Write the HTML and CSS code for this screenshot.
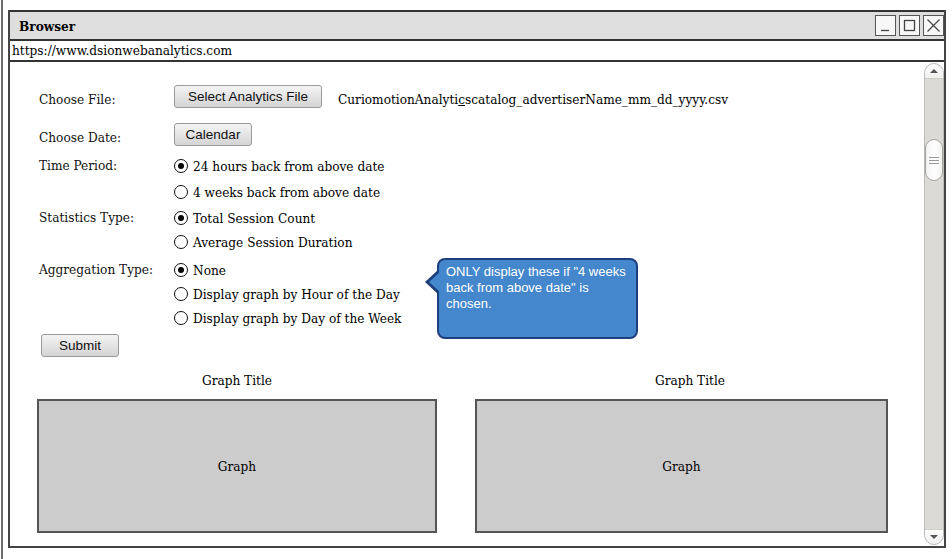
FILE: index.html
```html
<!DOCTYPE html>
<html>
<head>
<meta charset="utf-8">
<title>Browser</title>
<link rel="stylesheet" href="styles.css">
</head>
<body>
<div class="page">
  <div class="edge"></div>
  <div class="window">
    <div class="titlebar">
      <span class="title">Browser</span>
      <div class="winbtns">
        <span class="winbtn"><svg width="17" height="17" viewBox="0 0 17 17"><path d="M4 13.5h8" stroke="#444" stroke-width="1.3" fill="none"/></svg></span>
        <span class="winbtn"><svg width="17" height="17" viewBox="0 0 17 17"><rect x="3.5" y="3.5" width="10" height="10" stroke="#444" stroke-width="1.3" fill="none"/></svg></span>
        <span class="winbtn"><svg width="17" height="17" viewBox="0 0 17 17"><path d="M2.5 2.5l12 12M14.5 2.5l-12 12" stroke="#444" stroke-width="1.2" fill="none"/></svg></span>
      </div>
    </div>
    <div class="urlbar">https://www.dsionwebanalytics.com</div>
    <div class="content">
      <div class="main">
        <div class="row row-file">
          <div class="label">Choose File:</div>
          <button class="btn btn-file">Select Analytics File</button>
          <div class="filename">CuriomotionAnalyti<span class="ul">c</span>scatalog_advertiserName_mm_dd_yyyy.csv</div>
        </div>
        <div class="row row-date">
          <div class="label">Choose Date:</div>
          <button class="btn btn-cal">Calendar</button>
        </div>
        <div class="row group group-time">
          <div class="label glabel">Time Period:</div>
          <div class="radios radios-spaced">
            <div class="radio"><span class="circle on"></span><span>24 hours back from above date</span></div>
            <div class="radio"><span class="circle"></span><span>4 weeks back from above date</span></div>
          </div>
        </div>
        <div class="row group group-stat">
          <div class="label glabel">Statistics Type:</div>
          <div class="radios">
            <div class="radio"><span class="circle on"></span><span>Total Session Count</span></div>
            <div class="radio"><span class="circle"></span><span>Average Session Duration</span></div>
          </div>
        </div>
        <div class="row group group-agg">
          <div class="label glabel">Aggregation Type:</div>
          <div class="radios">
            <div class="radio"><span class="circle on"></span><span>None</span></div>
            <div class="radio"><span class="circle"></span><span>Display graph by Hour of the Day</span></div>
            <div class="radio"><span class="circle"></span><span>Display graph by Day of the Week</span></div>
          </div>
        </div>
        <button class="btn btn-submit">Submit</button>
        <div class="graphs">
          <div class="graph graph-left">
            <div class="gtitle">Graph Title</div>
            <div class="gbox">Graph</div>
          </div>
          <div class="graph graph-right">
            <div class="gtitle gtitle-right">Graph Title</div>
            <div class="gbox">Graph</div>
          </div>
        </div>
      </div>
      <div class="scrollbar">
        <div class="sb-up"><span class="tri-up"></span></div>
        <div class="sb-thumb"><span></span><span></span><span></span></div>
        <div class="sb-down"><span class="tri-down"></span></div>
      </div>
      <div class="tooltip">ONLY display these if "4 weeks back from above date" is chosen.</div>
    </div>
  </div>
</div>
</body>
</html>
```
FILE: styles.css
```css
html, body {
  margin: 0;
  padding: 0;
  background: #fff;
}
body {
  font-family: "DejaVu Serif Condensed", "DejaVu Serif", serif;
  font-stretch: condensed;
  font-size: 13.5px;
  color: #111;
}
.page {
  position: relative;
  width: 952px;
  height: 559px;
  display: flex;
  align-items: flex-start;
  overflow: hidden;
}
.edge {
  width: 2px;
  height: 559px;
  margin-left: 1px;
  background: #6a6a6a;
  flex: none;
}
.window {
  flex: none;
  width: 938px;
  height: 538px;
  margin-top: 10px;
  margin-left: 5px;
  box-sizing: border-box;
  border-left: 2px solid #444;
  border-right: 2px solid #444;
  border-bottom: 2px solid #444;
  display: flex;
  flex-direction: column;
}
.titlebar {
  height: 29px;
  box-sizing: border-box;
  border-top: 2px solid #333;
  background: #dedede;
  display: flex;
  align-items: center;
  justify-content: space-between;
  padding-left: 9px;
}
.title {
  font-weight: bold;
  font-size: 13.5px;
  color: #000;
}
.winbtns {
  display: flex;
  gap: 3px;
  margin-right: 0;
}
.winbtn {
  width: 21px;
  height: 21px;
  box-sizing: border-box;
  border: 1.5px solid #555;
  background: #f7f7f7;
  display: flex;
  align-items: center;
  justify-content: center;
}
.winbtn svg {
  display: block;
}
.urlbar {
  height: 23px;
  box-sizing: border-box;
  border-top: 2px solid #333;
  border-bottom: 2px solid #333;
  padding-left: 2px;
  line-height: 19px;
  background: #fff;
  color: #000;
}
.content {
  flex: 1;
  position: relative;
  display: flex;
  min-height: 0;
}
.main {
  flex: 1;
  padding-top: 23px;
  padding-left: 27px;
}
.row {
  display: flex;
  align-items: flex-start;
  padding-left: 2px;
}
.label {
  width: 135px;
  flex: none;
  line-height: 18px;
  padding-top: 5px;
}
.glabel {
  padding-top: 0;
  line-height: 22px;
}
.btn {
  font-family: "Liberation Sans", Arial, sans-serif;
  font-size: 13.5px;
  color: #111;
  height: 23px;
  box-sizing: border-box;
  padding: 0;
  border: 1px solid #9a9a9a;
  border-radius: 3px;
  background: linear-gradient(#f4f4f4, #d4d4d4);
  flex: none;
}
.btn-file {
  width: 148px;
}
.btn-cal {
  width: 78px;
}
.btn-submit {
  width: 78px;
  margin-top: 4px;
  margin-left: 4px;
  display: block;
}
.filename {
  margin-left: 16px;
  padding-top: 5px;
  line-height: 18px;
  color: #000;
}
.ul {
  text-decoration: underline;
}
.row-date {
  margin-top: 15px;
}
.group-time {
  margin-top: 8px;
}
.group-stat {
  margin-top: 2px;
}
.group-agg {
  margin-top: 4px;
}
.radios {
  display: flex;
  flex-direction: column;
}
.radios-spaced {
  gap: 2px;
}
.radio {
  height: 24px;
  display: flex;
  align-items: center;
  color: #000;
}
.circle {
  width: 14px;
  height: 14px;
  box-sizing: border-box;
  border: 1.5px solid #111;
  border-radius: 50%;
  margin-right: 5px;
  display: flex;
  align-items: center;
  justify-content: center;
  flex: none;
  background: #fff;
}
.circle.on::after {
  content: "";
  width: 6px;
  height: 6px;
  border-radius: 50%;
  background: #000;
}
.graphs {
  display: flex;
  gap: 38px;
  margin-top: 13px;
}
.graph-left {
  width: 400px;
}
.graph-right {
  width: 413px;
}
.gtitle {
  text-align: center;
  line-height: 20px;
  color: #000;
}
.gtitle-right {
  padding-left: 17px;
}
.gbox {
  margin-top: 9px;
  height: 134px;
  box-sizing: border-box;
  border: 2px solid #555;
  background: #cccccc;
  display: flex;
  align-items: center;
  justify-content: center;
  color: #000;
}
.scrollbar {
  width: 20px;
  flex: none;
  margin: 1px 0 1px 0;
  box-sizing: border-box;
  border: 1px solid #bdbbb8;
  border-radius: 10px;
  background: #dcdad7;
  display: flex;
  flex-direction: column;
  overflow: hidden;
}
.sb-up, .sb-down {
  height: 14px;
  background: linear-gradient(#fdfdfd, #f0f0f0);
  display: flex;
  align-items: center;
  justify-content: center;
  flex: none;
}
.sb-up {
  border-bottom: 1px solid #cfcdca;
}
.sb-down {
  margin-top: auto;
  border-top: 1px solid #cfcdca;
}
.tri-up {
  width: 0;
  height: 0;
  border-left: 4px solid transparent;
  border-right: 4px solid transparent;
  border-bottom: 4px solid #555;
}
.tri-down {
  width: 0;
  height: 0;
  border-left: 4px solid transparent;
  border-right: 4px solid transparent;
  border-top: 4px solid #555;
}
.sb-thumb {
  margin-top: 60px;
  height: 42px;
  box-sizing: border-box;
  border: 1px solid #a5a3a0;
  border-radius: 9px;
  background: linear-gradient(90deg, #f2f2f2, #ffffff, #f2f2f2);
  display: flex;
  flex-direction: column;
  align-items: center;
  justify-content: center;
  gap: 2px;
}
.sb-thumb span {
  width: 10px;
  height: 1px;
  background: #9a9896;
}
.tooltip {
  position: absolute;
  left: 427px;
  top: 196px;
  width: 201px;
  height: 81px;
  box-sizing: border-box;
  border: 2px solid #1e3f7e;
  border-radius: 8px;
  background: #4587cc;
  color: #fff;
  font-family: "Liberation Sans", Arial, sans-serif;
  font-stretch: normal;
  font-size: 13px;
  line-height: 16px;
  padding: 4px 6px 0 7px;
}
.tooltip::before {
  content: "";
  position: absolute;
  left: -14px;
  top: 10px;
  border-top: 12px solid transparent;
  border-bottom: 12px solid transparent;
  border-right: 13px solid #1e3f7e;
}
.tooltip::after {
  content: "";
  position: absolute;
  left: -10px;
  top: 12px;
  border-top: 10px solid transparent;
  border-bottom: 10px solid transparent;
  border-right: 11px solid #4587cc;
}
```
